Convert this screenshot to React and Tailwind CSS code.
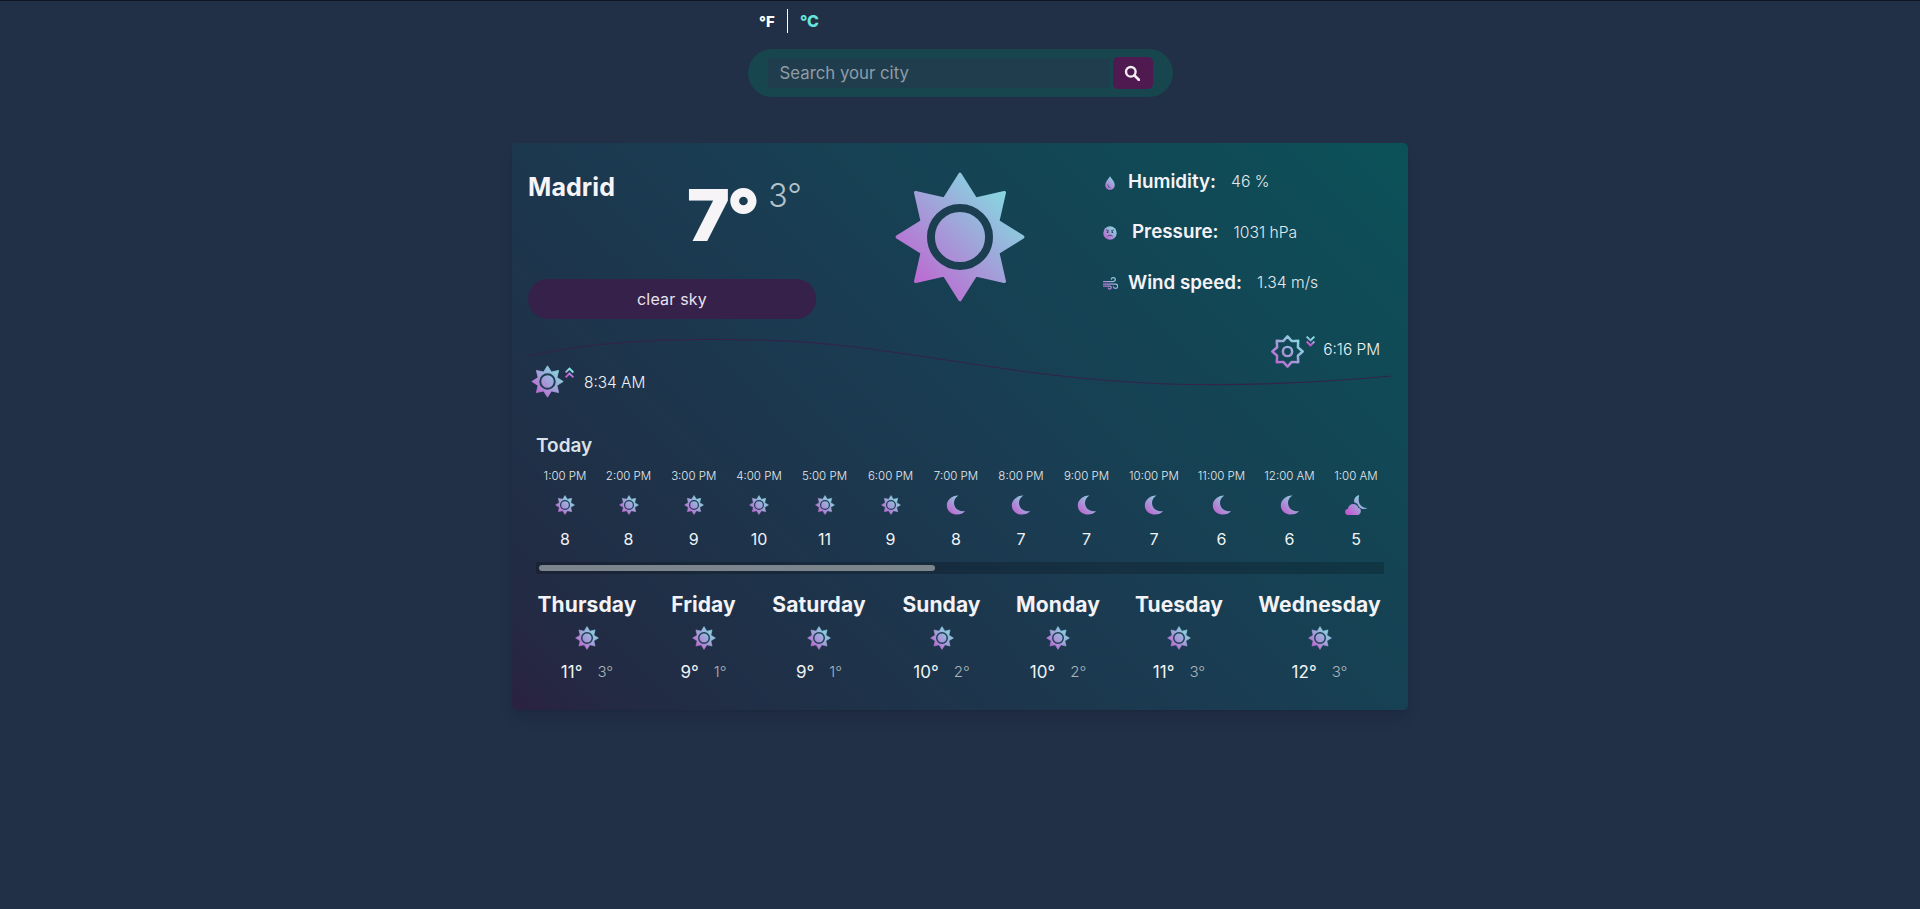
import React, { useId } from "react";

const starPath = (() => {
  const pts = [];
  for (let i = 0; i < 16; i++) {
    const a = (i * Math.PI) / 8 - Math.PI / 2;
    const r = i % 2 === 0 ? 47.5 : 31;
    pts.push(`${(50 + r * Math.cos(a)).toFixed(2)} ${(50 + r * Math.sin(a)).toFixed(2)}`);
  }
  return "M" + pts.join("L") + "Z";
})();

function Grad({ id, w = 100, h = 100 }) {
  return (
    <defs>
      <linearGradient id={id} gradientUnits="userSpaceOnUse" x1="8" y1={h - 8} x2={w - 8} y2="8">
        <stop offset="0%" stopColor="#c45cd0" />
        <stop offset="100%" stopColor="#80e4e2" />
      </linearGradient>
    </defs>
  );
}

function Sun({ className }) {
  const id = useId();
  const g = `url(#${id})`;
  return (
    <svg viewBox="0 0 100 100" className={className}>
      <Grad id={id} />
      <path d={starPath} fill={g} stroke={g} strokeWidth="2.5" strokeLinejoin="round" />
      <circle cx="50" cy="50" r="22" fill={g} stroke="#1b3f50" strokeWidth="6" />
    </svg>
  );
}

function SunOutline({ className }) {
  const id = useId();
  const g = `url(#${id})`;
  const pts = [];
  for (let i = 0; i < 16; i++) {
    const a = (i * Math.PI) / 8 - Math.PI / 2;
    const r = i % 2 === 0 ? 46 : 34;
    pts.push(`${(50 + r * Math.cos(a)).toFixed(2)} ${(50 + r * Math.sin(a)).toFixed(2)}`);
  }
  return (
    <svg viewBox="0 0 100 100" className={className}>
      <Grad id={id} />
      <path d={"M" + pts.join("L") + "Z"} fill="none" stroke={g} strokeWidth="7.5" strokeLinejoin="round" />
      <circle cx="50" cy="50" r="14" fill="none" stroke={g} strokeWidth="7.5" />
    </svg>
  );
}

function Moon({ className }) {
  const id = useId();
  return (
    <svg viewBox="0 0 100 100" className={className}>
      <Grad id={id} />
      <path
        d="M62 3C30 2 4 25 4 52c0 26 22 46 50 46 17 0 33-6 42-18-4 1-8 1-12 1-26 0-44-19-44-41C40 26 48 12 62 3Z"
        fill={`url(#${id})`}
      />
    </svg>
  );
}

function CloudMoon({ className }) {
  const id = useId();
  return (
    <svg viewBox="0 0 68 60" className={className}>
      <Grad id={id} w={68} h={60} />
      <path d="M42 0C30 3 25 13 27 22c7 2 12 6 14 14 8 7 18 8 26 3-14 1-24-8-26-20C40 12 41 5 42 0Z" fill={`url(#${id})`} />
      <path
        d="M8 60C3 60 0 56 0 51c0-5 3-9 8-9 1-9 8-15 16-15 7 0 13 4 15 11 5 0 8 4 8 10 0 7-4 12-10 12Z"
        fill={`url(#${id})`}
        stroke="#17475a"
        strokeWidth="2"
        paintOrder="stroke"
      />
    </svg>
  );
}

function Drop({ className }) {
  const id = useId();
  return (
    <svg viewBox="0 0 100 100" className={className}>
      <Grad id={id} />
      <path
        fillRule="evenodd"
        d="M50 2C64 24 84 42 84 64c0 20-15 34-34 34S16 84 16 64C16 42 36 24 50 2ZM33 62c0 14 10 24 22 24 2 0 2-3 0-3-9-1-17-9-18-21 0-3-4-3-4 0Z"
        fill={`url(#${id})`}
      />
    </svg>
  );
}

function Face({ className }) {
  const id = useId();
  return (
    <svg viewBox="0 0 100 100" className={className}>
      <Grad id={id} />
      <circle cx="50" cy="50" r="48" fill={`url(#${id})`} />
      <circle cx="33" cy="44" r="6" fill="#27405a" />
      <circle cx="67" cy="44" r="6" fill="#27405a" />
      <path d="M24 28l16 6M76 28l-16 6M34 72c8-9 24-9 32 0" fill="none" stroke="#27405a" strokeWidth="6" strokeLinecap="round" />
    </svg>
  );
}

function Wind({ className }) {
  const id = useId();
  return (
    <svg viewBox="0 0 100 100" className={className}>
      <Grad id={id} />
      <path
        d="M2 38h60c14 0 20-6 20-14s-7-13-14-13-12 4-13 10M2 54h80c10 0 16 6 16 14s-7 15-15 15-13-5-14-11M2 68h42c7 0 11 4 11 9s-5 10-10 10-8-3-9-7"
        fill="none"
        stroke={`url(#${id})`}
        strokeWidth="8"
        strokeLinecap="round"
      />
    </svg>
  );
}

function Chevrons({ up, className }) {
  const id = useId();
  return (
    <svg viewBox="0 0 20 24" className={className}>
      <Grad id={id} w={20} h={24} />
      <path
        d={up ? "M3 11l7-7 7 7M3 20l7-7 7 7" : "M3 4l7 7 7-7M3 13l7 7 7-7"}
        fill="none"
        stroke={`url(#${id})`}
        strokeWidth="3.6"
      />
    </svg>
  );
}

const hours = [
  ["1:00 PM", "w-[42px]", "sun", 8],
  ["2:00 PM", "w-[45px]", "sun", 8],
  ["3:00 PM", "w-[45.5px]", "sun", 9],
  ["4:00 PM", "w-[45px]", "sun", 10],
  ["5:00 PM", "w-[46px]", "sun", 11],
  ["6:00 PM", "w-[46px]", "sun", 9],
  ["7:00 PM", "w-[45px]", "moon", 8],
  ["8:00 PM", "w-[45px]", "moon", 7],
  ["9:00 PM", "w-[46px]", "moon", 7],
  ["10:00 PM", "w-[49px]", "moon", 7],
  ["11:00 PM", "w-[46px]", "moon", 6],
  ["12:00 AM", "w-[50px]", "moon", 6],
  ["1:00 AM", "w-[43px]", "cloud", 5],
];

const days = [
  ["Thursday", "w-[98px]", "11°", "3°"],
  ["Friday", "w-[65px]", "9°", "1°"],
  ["Saturday", "w-[96px]", "9°", "1°"],
  ["Sunday", "w-[79px]", "10°", "2°"],
  ["Monday", "w-[84px]", "10°", "2°"],
  ["Tuesday", "w-[88px]", "11°", "3°"],
  ["Wednesday", "w-[123px]", "12°", "3°"],
];

function Detail({ icon, label, value }) {
  return (
    <div className="flex items-center h-[20px]">
      {icon}
      <span className="font-semibold text-[18.8px] text-[#f5f3f7]">{label}</span>
      <span className="ml-[15px] text-[15.7px] font-light text-[#e3e8ec]">{value}</span>
    </div>
  );
}

export default function App() {
  return (
    <div className="min-h-screen bg-[#212f47] border-t border-[#0e1524] text-white font-['Inter','Noto_Sans',sans-serif]">
      <div className="flex flex-col items-center">
        <div className="w-[426px] flex items-center h-[24px] mt-[8px] pl-[12px]">
          <span className="w-[28px] text-[15px] font-extrabold leading-none">°F</span>
          <span className="w-px h-[24px] bg-white" />
          <span className="ml-[12px] text-[16px] font-extrabold leading-none text-[#66e4dc]">°C</span>
        </div>
        <div className="w-[425px] h-[48px] mt-[16px] rounded-full bg-[#17464f] flex items-center pl-[20px] pr-[20px]">
          <div className="w-[342px] h-[30px] bg-[#1f3d4c] flex items-center pl-[12px] pt-[2px] text-[16.8px] text-[#8f9ca8]">
            Search your city
          </div>
          <div className="ml-[3px] w-[40px] h-[32px] rounded-[5px] bg-[#4e1a50] flex items-center justify-center pr-[2px]">
            <svg viewBox="0 0 20 20" className="w-[16px] h-[16px]">
              <circle cx="8.5" cy="8.5" r="6" fill="none" stroke="#f4eef4" strokeWidth="3" />
              <path d="M13 13l5.5 5.5" stroke="#f4eef4" strokeWidth="3.4" strokeLinecap="round" />
            </svg>
          </div>
        </div>

        <div className="mt-[46px] w-[896px] h-[567px] rounded-[5px] shadow-lg bg-[linear-gradient(45deg,#2a2240_0%,#232a44_8%,#1f3047_20%,#1a3c52_50%,#0b5158_100%)] pt-[16px] pl-[16px] pr-[16px]">
          <div className="flex items-start h-[170px]">
            <div className="w-[288px]">
              <div className="flex h-[112px]">
                <div className="w-[159px] text-[25px] leading-[32px] font-bold tracking-[0.1px] text-[#f7f4f8] mt-[12px]">Madrid</div>
                <div className="text-[72px] leading-[72px] font-black text-[#f7f4f8] mt-[20px] tracking-[-3px]">7°</div>
                <div className="ml-[11px] text-[32px] leading-[32px] font-light text-[#b4c2c9] mt-[21px]">3°</div>
              </div>
              <div className="mt-[8px] h-[40px] rounded-full bg-[#36214a] flex items-center justify-center text-[16px] tracking-[0.2px] text-[#e9e1ee]">
                clear sky
              </div>
            </div>
            <Sun className="ml-[78px] mt-[12px] w-[132px] h-[132px]" />
            <div className="ml-[77px] mt-[13px] flex flex-col gap-[30.5px]">
              <Detail icon={<Drop className="w-[14px] h-[14px] mt-[2px] mr-[11px]" />} label="Humidity:" value="46 %" />
              <Detail icon={<Face className="w-[14px] h-[14px] mt-[1px] mr-[15px]" />} label="Pressure:" value="1031 hPa" />
              <Detail icon={<Wind className="w-[15px] h-[15px] mt-[1px] mr-[10px]" />} label="Wind speed:" value="1.34 m/s" />
            </div>
          </div>

          <div className="relative h-[105px] mx-[-1px]">
            <svg viewBox="0 0 864 105" className="absolute inset-0 w-full h-[105px]" fill="none" preserveAspectRatio="none">
              <path
                d="M0 27C70 12 140 9 230 11C360 13 480 50 640 55C720 57 800 53 862 47"
                stroke="#33244a"
                strokeWidth="1.2"
              />
            </svg>
            <div className="relative flex justify-between">
              <div className="flex items-start mt-[36px] ml-[4px]">
                <Sun className="w-[33px] h-[33px]" />
                <Chevrons up className="w-[11px] h-[14px] mt-[1px]" />
                <span className="ml-[9px] mt-[6px] text-[15.4px] font-light text-[#eef2f4]">8:34 AM</span>
              </div>
              <div className="flex items-start mt-[6px] mr-[13px]">
                <SunOutline className="w-[33px] h-[33px]" />
                <Chevrons className="w-[11px] h-[14px] mt-[-1px] ml-[1px]" />
                <span className="ml-[7px] mt-[3px] text-[15.4px] font-light text-[#eef2f4]">6:16 PM</span>
              </div>
            </div>
          </div>

          <div className="ml-[8px] text-[19px] leading-[24px] font-semibold text-[#dce1e7]">Today</div>
          <div className="ml-[8px] w-[848px]">
            <div className="flex gap-[20px] pl-[8px] mt-[9px]">
              {hours.map(([t, w, k, v]) => (
                <div key={t} className={`${w} flex flex-col items-center`}>
                  <span className="whitespace-nowrap text-[11.5px] leading-[18px] font-light text-[#e6ebee]">{t}</span>
                  <div className="h-[20px] mt-[10px] mb-[12px] flex items-center justify-center">
                    {k === "sun" && <Sun className="w-[20px] h-[20px]" />}
                    {k === "moon" && <Moon className="w-[20px] h-[20px]" />}
                    {k === "cloud" && <CloudMoon className="w-[23px] h-[20px]" />}
                  </div>
                  <span className="text-[16px] leading-[24px] text-[#f0f3f5]">{v}</span>
                </div>
              ))}
            </div>
            <div className="mt-[11px] h-[12px] bg-black/20 flex items-center pl-[3px]">
              <div className="w-[396px] h-[6px] rounded-full bg-[#7c848c]" />
            </div>
          </div>

          <div className="flex gap-[35px] ml-[10px] mt-[17px]">
            {days.map(([d, w, hi, lo]) => (
              <div key={d} className={`${w} flex flex-col items-center`}>
                <span className="whitespace-nowrap text-[21px] leading-[28px] font-bold tracking-[0.1px] text-[#f3f2f6]">{d}</span>
                <Sun className="w-[24px] h-[24px] mt-[7px]" />
                <div className="flex items-center whitespace-nowrap gap-[15px] mt-[10px]">
                  <span className="text-[17px] leading-[24px] text-[#f0f3f5]">{hi}</span>
                  <span className="text-[15px] leading-[24px] font-light text-[#aab4bb]">{lo}</span>
                </div>
              </div>
            ))}
          </div>
        </div>
      </div>
    </div>
  );
}
